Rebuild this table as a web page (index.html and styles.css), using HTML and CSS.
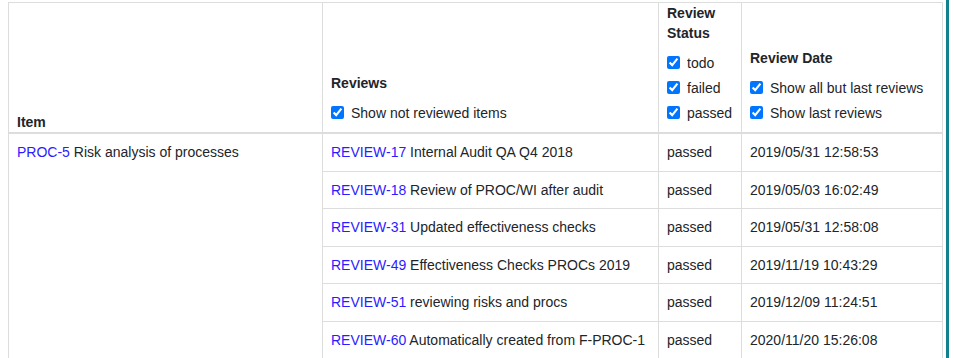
FILE: index.html
```html
<!DOCTYPE html>
<html lang="en">
<head>
<meta charset="utf-8">
<title>Reviews</title>
<link rel="stylesheet" href="styles.css">
</head>
<body>
<div class="page">
  <table class="review-table">
    <colgroup>
      <col class="c-item">
      <col class="c-reviews">
      <col class="c-status">
      <col class="c-date">
    </colgroup>
    <thead>
      <tr>
        <th><div class="title">Item</div></th>
        <th>
          <div class="title">Reviews</div>
          <div class="filters">
            <label class="check"><input type="checkbox" checked>Show not reviewed items</label>
          </div>
        </th>
        <th>
          <div class="title">Review Status</div>
          <div class="filters">
            <label class="check"><input type="checkbox" checked>todo</label>
            <label class="check"><input type="checkbox" checked>failed</label>
            <label class="check"><input type="checkbox" checked>passed</label>
          </div>
        </th>
        <th>
          <div class="title">Review Date</div>
          <div class="filters">
            <label class="check"><input type="checkbox" checked>Show all but last reviews</label>
            <label class="check"><input type="checkbox" checked>Show last reviews</label>
          </div>
        </th>
      </tr>
    </thead>
    <tbody>
      <tr>
        <td rowspan="7" class="item-cell"><a href="#">PROC-5</a> Risk analysis of processes</td>
        <td><a href="#">REVIEW-17</a> Internal Audit QA Q4 2018</td>
        <td>passed</td>
        <td>2019/05/31 12:58:53</td>
      </tr>
      <tr>
        <td><a href="#">REVIEW-18</a> Review of PROC/WI after audit</td>
        <td>passed</td>
        <td>2019/05/03 16:02:49</td>
      </tr>
      <tr>
        <td><a href="#">REVIEW-31</a> Updated effectiveness checks</td>
        <td>passed</td>
        <td>2019/05/31 12:58:08</td>
      </tr>
      <tr>
        <td><a href="#">REVIEW-49</a> Effectiveness Checks PROCs 2019</td>
        <td>passed</td>
        <td>2019/11/19 10:43:29</td>
      </tr>
      <tr>
        <td><a href="#">REVIEW-51</a> reviewing risks and procs</td>
        <td>passed</td>
        <td>2019/12/09 11:24:51</td>
      </tr>
      <tr>
        <td><a href="#">REVIEW-60</a> Automatically created from F-PROC-1</td>
        <td>passed</td>
        <td>2020/11/20 15:26:08</td>
      </tr>
      <tr class="spacer-row">
        <td></td>
        <td></td>
        <td></td>
      </tr>
    </tbody>
  </table>
</div>
</body>
</html>
```
FILE: styles.css
```css
html, body {
  margin: 0;
  padding: 0;
  height: 100%;
  overflow: hidden;
  background: #ffffff;
}

body {
  display: flex;
  align-items: stretch;
  font-family: "Liberation Sans", Arial, sans-serif;
  font-size: 14px;
  color: #212529;
}

.page {
  box-sizing: border-box;
  height: 100%;
  padding: 2px 3px 0 8px;
  border-right: 3px solid #12808e;
}

.review-table {
  border-collapse: collapse;
  table-layout: fixed;
  width: 934px;
}

.c-item { width: 314px; }
.c-reviews { width: 336px; }
.c-status { width: 83px; }
.c-date { width: 201px; }

.review-table th,
.review-table td {
  border: 1px solid #dddddd;
  line-height: 20px;
  text-align: left;
}

.review-table th {
  padding: 0 8px;
  vertical-align: bottom;
  font-weight: bold;
  border-bottom: 2px solid #dddddd;
}

.review-table td {
  padding: 8px 8px 8.5px;
  vertical-align: top;
}

.spacer-row td {
  height: 20px;
}

.title {
  line-height: 20px;
}

.filters {
  display: flex;
  flex-direction: column;
  margin: 7px 0 7px;
}

.check {
  display: flex;
  align-items: center;
  height: 25px;
  font-weight: normal;
  white-space: nowrap;
}

.check input {
  width: 13px;
  height: 13px;
  margin: 0 7px 0 0;
  flex: none;
}

a {
  color: #2b1cff;
  text-decoration: none;
}
```
